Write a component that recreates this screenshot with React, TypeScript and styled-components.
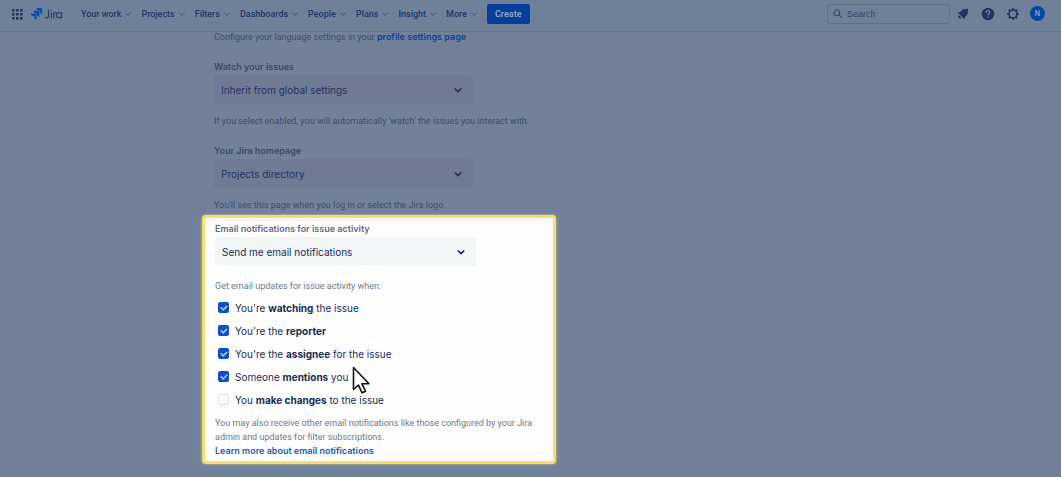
import React from "react";
import styled, { createGlobalStyle } from "styled-components";

const GlobalStyle = createGlobalStyle`
  * { box-sizing: border-box; }
  body {
    margin: 0;
    background: #71819a;
    color: #263c6b;
    font-family: Inter, "Liberation Sans", sans-serif;
    font-size: 9px;
    line-height: 14px;
  }
  button, input, select { font-family: inherit; }
`;

const Header = styled.header`
  display: flex;
  align-items: center;
  height: 32px;
  padding: 0 16px 4px 10px;
  background: #6f8199;
  border-bottom: 1px solid #66758f;
`;

const IconButton = styled.button`
  display: flex;
  padding: 0;
  border: 0;
  background: none;
  color: #20345f;
`;

const Brand = styled.a`
  display: flex;
  align-items: center;
  margin-left: 6px;
  color: #2c4168;
  text-decoration: none;
`;

const Nav = styled.nav`
  display: flex;
  gap: 8px;
  margin-left: 18px;
`;

const NavButton = styled.button`
  display: flex;
  align-items: center;
  gap: 2px;
  padding: 0;
  border: 0;
  background: none;
  color: #22376a;
  font-family: Roboto, sans-serif;
  font-size: 9px;
  font-weight: 500;
  line-height: 14px;
  svg { color: #3a4e77; }
`;

const CreateButton = styled.button`
  height: 20px;
  margin-left: 8px;
  padding: 0 8px;
  border: 0;
  border-radius: 2px;
  background: #04409a;
  color: #8fa5c6;
  font-family: Roboto, sans-serif;
  font-size: 9px;
  font-weight: 600;
`;

const SearchBox = styled.label`
  display: flex;
  align-items: center;
  gap: 4px;
  width: 123px;
  height: 20px;
  margin-left: auto;
  padding: 0 4px;
  border: 1px solid #5f7089;
  border-radius: 3px;
  color: #2c4169;
`;

const SearchInput = styled.input`
  flex: 1;
  min-width: 0;
  padding: 0;
  border: 0;
  outline: 0;
  background: none;
  color: inherit;
  font-family: "Liberation Sans", sans-serif;
  font-size: 9px;
  &::placeholder { color: #33466b; opacity: 1; }
`;

const Tools = styled.div`
  display: flex;
  align-items: center;
  gap: 9px;
  margin-left: 5px;
`;

const Avatar = styled.button`
  width: 15px;
  height: 15px;
  padding: 0;
  border: 0;
  border-radius: 50%;
  background: #0646a0;
  color: #8fa8cc;
  font-size: 7px;
  font-weight: 600;
`;

const Main = styled.main`
  margin-top: -2px;
  padding: 0 24px 12px 202px;
`;

const Section = styled.section`
  padding-left: 12px;
`;

const Hint = styled.p<{ $bright?: boolean }>`
  margin: 0;
  color: ${(p) => (p.$bright ? "#6f788a" : "#3c4d6d")};
  font-family: Roboto, sans-serif;
`;

const FieldLabel = styled.label<{ $bright?: boolean }>`
  display: block;
  margin-bottom: 1px;
  color: ${(p) => (p.$bright ? "#5f6a80" : "#3a4a69")};
  font-weight: 600;
`;

const Field = styled.div`
  padding: 16px 0 10px;
`;

const Link = styled.a<{ $bright?: boolean }>`
  color: ${(p) => (p.$bright ? "#1f56b8" : "#0d439c")};
  font-family: Inter, sans-serif;
  font-weight: 600;
  text-decoration: none;
`;

const SelectWrap = styled.div<{ $bright?: boolean }>`
  position: relative;
  width: ${(p) => (p.$bright ? 261 : 259)}px;
  color: ${(p) => (p.$bright ? "#172b54" : "#1f3564")};
  svg {
    position: absolute;
    top: 9px;
    right: 9px;
    pointer-events: none;
  }
`;

const SelectInput = styled.select<{ $bright?: boolean }>`
  display: block;
  appearance: none;
  width: 100%;
  height: 29px;
  padding: 0 24px 0 7px;
  border: 0;
  border-radius: 3px;
  background: ${(p) => (p.$bright ? "#f2f6f7" : "#6f7a94")};
  color: inherit;
  font-size: 10px;
`;

const Highlight = styled.section`
  width: 354px;
  margin-top: 3px;
  padding: 4px 8px 3px 10px;
  border: 3px solid #fbdc70;
  border-radius: 4px;
  background: #fefefe;
  box-shadow: 0 0 3px #d5c272;
`;

const HighlightField = styled.div`
  padding-bottom: 13px;
`;

const OptionGroup = styled.div`
  position: relative;
  margin: 3px 0 5px;
`;

const Options = styled.ul`
  margin: 0;
  padding: 0;
  list-style: none;
`;

const Option = styled.label`
  display: flex;
  align-items: center;
  gap: 6px;
  height: 23px;
  padding-left: 3px;
  color: #172b54;
  font-size: 10px;
`;

const Tick = styled.input`
  appearance: none;
  display: grid;
  place-items: center;
  width: 11px;
  height: 11px;
  margin: 0;
  border: 1px solid #dcdfe6;
  border-radius: 2px;
  background: #fafbfc;
  &:checked { border-color: #0b50cc; background: #0b50cc; }
  &:checked::after {
    content: "";
    width: 5px;
    height: 3px;
    margin-top: -1px;
    border: solid #fff;
    border-width: 0 0 1px 1px;
    transform: rotate(-45deg);
  }
`;

const Pointer = styled.svg`
  position: absolute;
  left: 137px;
  top: 70px;
`;

const Chevron = ({ size, width }: { size: number; width: number }) => (
  <svg width={size} height={size} viewBox="0 0 12 12" fill="none" stroke="currentColor" strokeWidth={width} strokeLinecap="round" strokeLinejoin="round" aria-hidden="true">
    <path d="M3.2 4.9 6 7.6l2.8-2.7" />
  </svg>
);

const menus = ["Your work", "Projects", "Filters", "Dashboards", "People", "Plans", "Insight", "More"];

const events = [
  { before: "You're ", strong: "watching", after: " the issue", on: true },
  { before: "You're the ", strong: "reporter", after: "", on: true },
  { before: "You're the ", strong: "assignee", after: " for the issue", on: true },
  { before: "Someone ", strong: "mentions", after: " you", on: true },
  { before: "You ", strong: "make changes", after: " to the issue", on: false },
];

type SelectProps = { id: string; label: string; value: string; bright?: boolean };

const SelectField = ({ id, label, value, bright }: SelectProps) => (
  <>
    <FieldLabel htmlFor={id} $bright={bright}>{label}</FieldLabel>
    <SelectWrap $bright={bright}>
      <SelectInput id={id} $bright={bright}>
        <option>{value}</option>
      </SelectInput>
      <Chevron size={12} width={1.5} />
    </SelectWrap>
  </>
);

export default function App() {
  return (
    <>
      <GlobalStyle />
      <Header>
        <IconButton aria-label="Switch product">
          <svg width="14" height="14" viewBox="0 0 14 14" fill="currentColor">
            {[2, 6, 10].map((y) => [2, 6, 10].map((x) => (
              <rect key={`${x}-${y}`} x={x} y={y} width="2.6" height="2.6" rx=".6" />
            )))}
          </svg>
        </IconButton>
        <Brand href="#" aria-label="Jira">
          <svg width="33" height="14" viewBox="0 0 33 14" fill="none">
            <path fill="#0d4db0" d="M11.7 1H6.2c0 1.4 1.1 2.5 2.5 2.5h1v1c0 1.4 1.1 2.5 2.5 2.5V1.5c0-.3-.2-.5-.5-.5Z" />
            <path fill="#0b469f" d="M9 3.8H3.4c0 1.3 1.1 2.4 2.5 2.4h1v1c0 1.4 1.1 2.5 2.5 2.5V4.2C9.4 4 9.2 3.8 9 3.8Z" />
            <path fill="#0d4db0" d="M6.2 6.5H.7C.7 7.9 1.8 9 3.2 9h1v1c0 1.4 1.1 2.5 2.5 2.5V7c0-.3-.2-.5-.5-.5Z" />
            <g stroke="#2c4168" strokeWidth="1.2" strokeLinecap="round">
              <path d="M18.5 2.8v5.9c0 1.5-.7 2.3-1.9 2.3-.5 0-.9-.1-1.2-.3M21.3 5.5V11M23.7 11V5.5M23.7 7.5c.3-1.4 1-2 2.3-2M31.6 5.5V11" />
              <circle cx="29" cy="8.3" r="2.6" />
            </g>
            <circle cx="21.3" cy="3.2" r=".8" fill="#2c4168" />
          </svg>
        </Brand>
        <Nav>
          {menus.map((m) => (
            <NavButton key={m}>{m}<Chevron size={10} width={1.2} /></NavButton>
          ))}
        </Nav>
        <CreateButton>Create</CreateButton>
        <SearchBox>
          <svg width="11" height="11" viewBox="0 0 11 11" fill="none" stroke="currentColor" strokeLinecap="round">
            <circle cx="4.8" cy="4.8" r="3" />
            <path d="m7.2 7.2 2.3 2.3" />
          </svg>
          <SearchInput type="search" placeholder="Search" aria-label="Search" />
        </SearchBox>
        <Tools>
          <IconButton aria-label="Notifications">
            <svg width="16" height="16" viewBox="0 0 16 16" fill="currentColor">
              <path d="M12.8 2.8c.4.5.2 1 0 1.4.4 2.2-.1 4-1.4 5.3l-1.6 1.7c-.3.3-.2 1 .1 1.5.2.4-.2.7-.6.4L3 7c-.4-.4-.1-.8.3-.6.6.2 1.2.2 1.5-.1l1.7-1.7c1.3-1.3 3-1.8 5-1.4.4-.5.9-.8 1.3-.4ZM3.8 9.2l2.8 2.8c-.8.8-2 .8-2.8 0s-.8-2 0-2.8Z" />
            </svg>
          </IconButton>
          <IconButton aria-label="Help">
            <svg width="16" height="16" viewBox="0 0 16 16" fill="none">
              <circle cx="8" cy="8" r="6.2" fill="#20345f" />
              <path d="M6.1 6.5c0-1.200.8-1.900 1.900-1.900s1.900.7 1.900 1.700c0 1.300-1.800 1.300-1.800 2.700" stroke="#71819a" strokeWidth="1.3" strokeLinecap="round" />
              <circle cx="8.1" cy="11.2" r=".8" fill="#71819a" />
            </svg>
          </IconButton>
          <IconButton aria-label="Settings">
            <svg width="16" height="16" viewBox="0 0 16 16" fill="none" stroke="currentColor">
              <circle cx="8" cy="8" r="3.9" strokeWidth="1.5" />
              <path strokeWidth="2.2" d="M8 2.2v1.8M8 12v1.8M2.2 8H4M12 8h1.8M3.900 3.900l1.200 1.200M10.900 10.900l1.200 1.200M3.900 12.100l1.200-1.200M10.900 5.100l1.200-1.200" />
            </svg>
          </IconButton>
          <Avatar aria-label="Your profile">N</Avatar>
        </Tools>
      </Header>
      <Main>
        <Section>
          <Hint>Configure your language settings in your <Link href="#">profile settings page</Link></Hint>
          <Field>
            <SelectField id="watch" label="Watch your issues" value="Inherit from global settings" />
          </Field>
          <Hint>If you select enabled, you will automatically 'watch' the issues you interact with.</Hint>
          <Field>
            <SelectField id="home" label="Your Jira homepage" value="Projects directory" />
          </Field>
          <Hint>You'll see this page when you log in or select the Jira logo.</Hint>
        </Section>
        <Highlight>
          <HighlightField>
            <SelectField id="email" label="Email notifications for issue activity" value="Send me email notifications" bright />
          </HighlightField>
          <Hint $bright>Get email updates for issue activity when:</Hint>
          <OptionGroup>
            <Options>
              {events.map((e) => (
                <li key={e.strong}>
                  <Option>
                    <Tick type="checkbox" defaultChecked={e.on} />
                    <span>{e.before}<b>{e.strong}</b>{e.after}</span>
                  </Option>
                </li>
              ))}
            </Options>
            <Pointer width="20" height="30" viewBox="0 0 20 30" aria-hidden="true">
              <path d="M1.5 1.5v22l5-4.300 3.600 7.600 3.400-1.600-3.500-7.400h7Z" fill="#fff" stroke="#111" strokeWidth="1.6" strokeLinejoin="round" />
            </Pointer>
          </OptionGroup>
          <Hint $bright>You may also receive other email notifications like those configured by your Jira admin and updates for filter subscriptions.</Hint>
          <Link href="#" $bright>Learn more about email notifications</Link>
        </Highlight>
      </Main>
    </>
  );
}
